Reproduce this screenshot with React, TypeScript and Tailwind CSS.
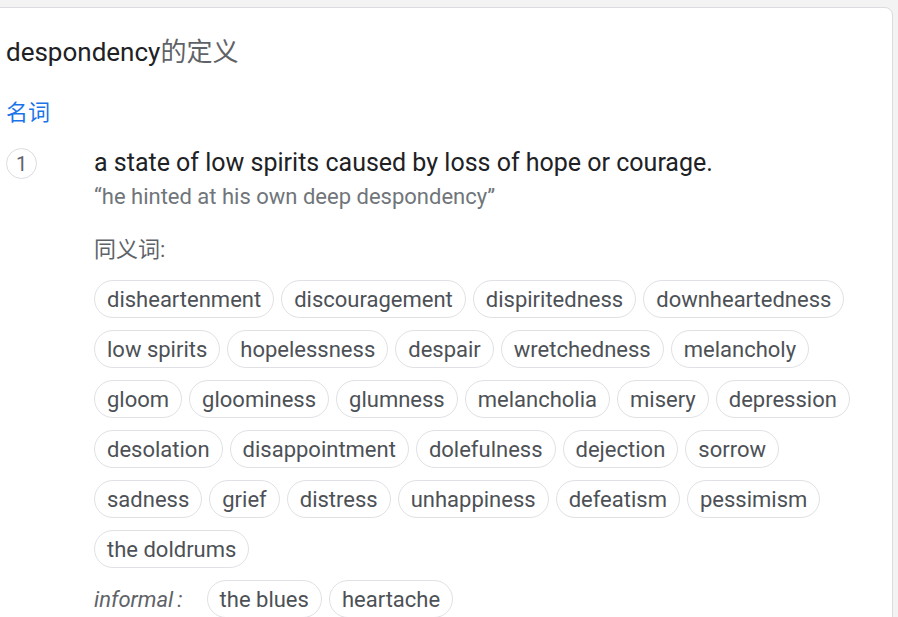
const rows: string[] = [
  'disheartenment', 'discouragement', 'dispiritedness', 'downheartedness',
  'low spirits', 'hopelessness', 'despair', 'wretchedness', 'melancholy',
  'gloom', 'gloominess', 'glumness', 'melancholia', 'misery', 'depression',
  'desolation', 'disappointment', 'dolefulness', 'dejection', 'sorrow',
  'sadness', 'grief', 'distress', 'unhappiness', 'defeatism', 'pessimism',
  'the doldrums',
]

function Chip({ word }: { word: string }) {
  return (
    <span className="inline-flex h-[38px] items-center rounded-full border border-[#dfe1e5] px-[12px] text-[22px] text-[#4d5156]">
      {word}
    </span>
  )
}

export default function App() {
  return (
    <div className="h-[617px] w-[898px] overflow-hidden bg-[#f3f3f3] pt-[7px] pr-[5px] font-['Roboto','Noto_Sans_CJK_SC',sans-serif]">
      <div className="-ml-3 h-[700px] rounded-lg border border-[#dadce0] bg-white pl-[17px]">
        {/* header */}
        <h1 className="pt-[28px] text-[26px] leading-[32px] text-[#202124]">
          despondency<span className="text-[#5f6368]">的定义</span>
        </h1>
        <div className="mt-[32px] text-[22px] leading-[26px] text-[#1a73e8]">名词</div>

        {/* sense 1 */}
        <div className="mt-[22px] flex">
          <div className="flex h-[31px] w-[31px] shrink-0 items-center justify-center rounded-full border border-[#dadce0] text-[20px] text-[#5f6368]">
            1
          </div>
          <div className="ml-[57px] flex-1 pr-[22px]">
            <div className="mt-[-1px] text-[25px] leading-[32px] text-[#202124]">
              a state of low spirits caused by loss of hope or courage.
            </div>
            <div className="mt-[3px] text-[22px] leading-[30px] text-[#70757a]">
              “he hinted at his own deep despondency”
            </div>

            <div className="mt-[24px] text-[22px] leading-[28px] text-[#5f6368]">同义词:</div>
            <div className="mt-[16px] flex flex-wrap gap-x-[7px] gap-y-[12px]">
              {rows.map((w) => (
                <Chip key={w} word={w} />
              ))}
            </div>
            <div className="mt-[12px] flex items-center gap-x-[7px]">
              <span className="mr-[17px] text-[22px] italic text-[#5f6368]">
                informal<span className="ml-[4px]">:</span>
              </span>
              <Chip word="the blues" />
              <Chip word="heartache" />
            </div>
          </div>
        </div>
      </div>
    </div>
  )
}
